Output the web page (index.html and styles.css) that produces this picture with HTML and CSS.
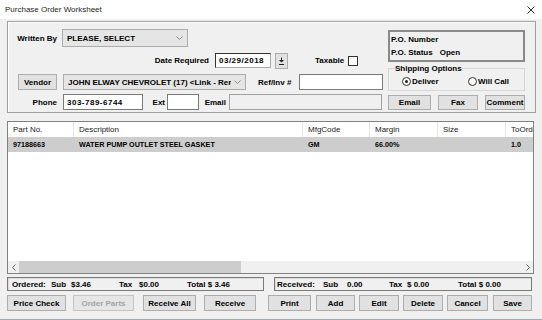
FILE: index.html
```html
<!DOCTYPE html>
<html lang="en">
  <head>
    <meta charset="UTF-8" />
    <title>Purchase Order Worksheet</title>
    <link rel="stylesheet" href="styles.css">
  </head>
  <body>
    <div class="window">
      <div class="titlebar">
        <span>Purchase Order Worksheet</span>
        <svg class="close" width="8" height="8" viewBox="0 0 8 8">
          <path d="M0.5 0.5L7.5 7.5M7.5 0.5L0.5 7.5" stroke="#333" stroke-width="1" fill="none" />
        </svg>
      </div>

      <div class="content">
        <div class="panel">
          <div class="form">
            <div class="row r1">
              <span class="lbl">Written By</span>
              <div class="select writer">
                <span class="select-text">PLEASE, SELECT</span>
                <svg class="chev" width="7" height="4" viewBox="0 0 7 4"><polyline points="0.5,0.5 3.5,3.5 6.5,0.5" stroke="#8a8a8a" fill="none" /></svg>
              </div>
            </div>
            <div class="row r2">
              <span class="lbl-date">Date Required</span>
              <div class="input date num">03/29/2018</div>
              <button class="btn datebtn">
                <svg width="7" height="8" viewBox="0 0 7 8"><path d="M3.5 0.5V3" stroke="#222" /><path d="M1 3h5L3.5 5.5z" fill="#222" /><path d="M1 7.5h5" stroke="#222" /></svg>
              </button>
              <span class="taxable">Taxable</span>
              <span class="check"></span>
            </div>
            <div class="row r3">
              <button class="btn vendor">Vendor</button>
              <div class="select vendor-sel">
                <span class="select-text">JOHN ELWAY CHEVROLET (17) &lt;Link - Remote&gt;</span>
                <svg class="chev" width="7" height="4" viewBox="0 0 7 4"><polyline points="0.5,0.5 3.5,3.5 6.5,0.5" stroke="#8a8a8a" fill="none" /></svg>
              </div>
              <span class="lbl-ref">Ref/Inv #</span>
              <div class="input ref"></div>
            </div>
            <div class="row r4">
              <span class="lbl">Phone</span>
              <div class="input phone num">303-789-6744</div>
              <span class="lbl-ext">Ext</span>
              <div class="input ext"></div>
              <span class="lbl-email">Email</span>
              <div class="input email"></div>
            </div>
          </div>

          <div class="side">
            <div class="po">
              <div>P.O. Number</div>
              <div><span class="po-key">P.O. Status</span>Open</div>
            </div>
            <fieldset class="ship">
              <legend>Shipping Options</legend>
              <div class="radios">
                <span class="radio deliver"><span class="dot on"></span>Deliver</span>
                <span class="radio"><span class="dot"></span>Will Call</span>
              </div>
            </fieldset>
            <div class="side-btns">
              <button class="btn b-email">Email</button>
              <button class="btn b-fax">Fax</button>
              <button class="btn b-comment">Comment</button>
            </div>
          </div>
        </div>

        <div class="grid">
          <div class="grid-view">
            <div class="cols head">
              <span>Part No.</span>
              <span>Description</span>
              <span>MfgCode</span>
              <span>Margin</span>
              <span>Size</span>
              <span>ToOrder</span>
            </div>
            <div class="cols item">
              <span>97188663</span>
              <span>WATER PUMP OUTLET STEEL GASKET</span>
              <span>GM</span>
              <span>66.00%</span>
              <span></span>
              <span>1.0</span>
            </div>
          </div>
          <div class="hscroll">
            <span class="arrow">
              <svg width="4" height="7" viewBox="0 0 4 7"><polyline points="3.5,0.5 0.5,3.5 3.5,6.5" stroke="#606060" fill="none" /></svg>
            </span>
            <span class="thumb"></span>
            <span class="track"></span>
            <span class="arrow">
              <svg width="4" height="7" viewBox="0 0 4 7"><polyline points="0.5,0.5 3.5,3.5 0.5,6.5" stroke="#606060" fill="none" /></svg>
            </span>
          </div>
        </div>

        <div class="totals">
          <div class="sum ordered">
            <span class="t1">Ordered:</span>
            <span class="t2">Sub</span>
            <span class="t3">$3.46</span>
            <span class="t4">Tax</span>
            <span class="t5">$0.00</span>
            <span>Total $ 3.46</span>
          </div>
          <div class="sum received">
            <span class="t1">Received:</span>
            <span class="t2">Sub</span>
            <span class="t3">0.00</span>
            <span class="t4">Tax</span>
            <span class="t5">$ 0.00</span>
            <span>Total $ 0.00</span>
          </div>
        </div>

        <div class="actions">
          <button class="btn a-price">Price Check</button>
          <button class="btn a-order" disabled>Order Parts</button>
          <button class="btn a-recall">Receive All</button>
          <button class="btn a-receive">Receive</button>
          <button class="btn a-print">Print</button>
          <button class="btn a-add">Add</button>
          <button class="btn a-edit">Edit</button>
          <button class="btn a-delete">Delete</button>
          <button class="btn a-cancel">Cancel</button>
          <button class="btn a-save">Save</button>
        </div>
      </div>
    </div>
  </body>
</html>
```

FILE: styles.css
```css
* {
  box-sizing: border-box;
}

body {
  margin: 0;
  font-family: "Liberation Sans", Arial, sans-serif;
  font-size: 8px;
  font-weight: bold;
  color: #000;
}

.window {
  width: 542px;
  height: 320px;
  background-color: #f0f0f0;
  border-bottom: 1px solid #7fb1e3;
  overflow: hidden;
}

.titlebar {
  height: 19px;
  background-color: #fff;
  display: flex;
  align-items: center;
  justify-content: space-between;
  padding: 0 7px 0 5px;
  font-weight: normal;
  color: #1e1e1e;
}

.content {
  padding: 2px 6px 0 7px;
}

/* top panel */

.panel {
  height: 92px;
  display: flex;
  padding-top: 7px;
  border: 1px solid #a0a0a0;
  box-shadow: inset 1px 1px 0 #fff;
}

.form {
  width: 376px;
}

.row {
  display: flex;
  align-items: center;
}

.r1 {
  height: 18px;
}

.r2 {
  height: 15px;
  margin-top: 6px;
}

.r3 {
  height: 16px;
  margin-top: 6px;
}

.r4 {
  height: 16px;
  margin-top: 4px;
}

.lbl {
  width: 51px;
  text-align: right;
  padding-right: 2px;
}

.select {
  height: 100%;
  display: flex;
  align-items: center;
  background-color: #e5e5e5;
  border: 1px solid #acacac;
  padding: 0 4px;
}

.select-text {
  flex: 1;
  overflow: hidden;
  white-space: nowrap;
}

.chev {
  margin-left: 3px;
}

.writer {
  width: 126px;
  margin-left: 3px;
}

.vendor-sel {
  width: 183px;
  margin-left: 6px;
}

.input {
  height: 100%;
  background-color: #fff;
  border: 1px solid #7a7a7a;
  padding: 0 3px;
  display: flex;
  align-items: center;
}

.num {
  letter-spacing: 0.5px;
}

.lbl-date {
  width: 204px;
  text-align: right;
  padding-right: 3px;
}

.date {
  width: 56px;
  margin-left: 3px;
  border-color: #333 #aaa #aaa #333;
}

.datebtn {
  width: 13px;
  height: 13px;
  margin-left: 4px;
  padding: 0;
  display: flex;
  align-items: center;
  justify-content: center;
}

.taxable {
  margin-left: 27px;
}

.check {
  width: 10px;
  height: 10px;
  margin-left: 4px;
  background-color: #fff;
  border: 1px solid #333;
}

.btn {
  font: inherit;
  color: #000;
  background-color: #e1e1e1;
  border: 1px solid #adadad;
  padding: 0;
  height: 16px;
}

.btn:disabled {
  color: #a3a3a3;
  background-color: #e6e6e6;
  border-color: #c4c4c4;
}

.vendor {
  width: 39px;
  height: 16px;
  margin-left: 10px;
}

.lbl-ref {
  width: 41px;
  margin-left: 12px;
}

.ref {
  width: 84px;
}

.phone {
  width: 80px;
  margin-left: 4px;
}

.lbl-ext {
  width: 24px;
  text-align: right;
  padding-right: 2px;
}

.ext {
  width: 32px;
}

.lbl-email {
  width: 30px;
  text-align: right;
  padding-right: 3px;
}

.email {
  width: 153px;
  background-color: #f0f0f0;
  border-color: #a0a0a0;
}

/* side column */

.side {
  width: 137px;
  margin-left: 4px;
}

.po {
  height: 32px;
  margin-top: 1px;
  border: 2px solid #8a8a8a;
  padding: 1px 0 0 1px;
  line-height: 13px;
}

.po-key {
  margin-right: 7px;
}

.ship {
  margin: 2px 0 0;
  padding: 0 0 4px 6px;
  border: 1px solid #d6d6d6;
  min-width: 0;
}

.ship legend {
  padding: 0;
  line-height: 9px;
}

.radios {
  display: flex;
  align-items: center;
  height: 10px;
  margin-top: 3px;
}

.radio {
  display: flex;
  align-items: center;
}

.deliver {
  width: 66px;
  margin-left: 7px;
}

.dot {
  width: 9px;
  height: 9px;
  border-radius: 50%;
  border: 1px solid #333;
  background-color: #fff;
  margin-right: 1px;
  display: flex;
  align-items: center;
  justify-content: center;
}

.dot.on::after {
  content: "";
  width: 3px;
  height: 3px;
  border-radius: 50%;
  background-color: #222;
}

.side-btns {
  display: flex;
  margin-top: 4px;
}

.side-btns .btn {
  height: 15px;
}

.b-email {
  width: 43px;
}

.b-fax {
  width: 40px;
  margin-left: 7px;
}

.b-comment {
  width: 40px;
  margin-left: 7px;
}

/* grid */

.grid {
  width: 527px;
  height: 153px;
  margin-top: 8px;
  border: 1px solid #828282;
  background-color: #fff;
  display: flex;
  flex-direction: column;
}

.grid-view {
  flex: 1;
  overflow: hidden;
}

.cols {
  display: grid;
  grid-template-columns: 66px 229px 67px 68px 68px 80px;
  height: 15px;
  width: 578px;
}

.cols span {
  padding-left: 5px;
  display: flex;
  align-items: center;
  white-space: nowrap;
}

.head {
  font-weight: normal;
  color: #1a1a1a;
}

.head span {
  border-right: 1px solid #e5e5e5;
}

.item {
  background-color: #cdcdcd;
  font-size: 7.2px;
}

.hscroll {
  height: 12px;
  display: flex;
  background-color: #f0f0f0;
}

.arrow {
  width: 11px;
  display: flex;
  align-items: center;
  justify-content: center;
}

.thumb {
  width: 222px;
  background-color: #cdcdcd;
}

.track {
  flex: 1;
}

/* totals */

.totals {
  display: flex;
  margin-top: 3px;
}

.sum {
  height: 14px;
  width: 257px;
  border: 1px solid #7a7a7a;
  box-shadow: inset 1px 1px 0 #dcdcdc;
  display: flex;
  align-items: center;
  white-space: nowrap;
}

.ordered {
  padding-left: 4px;
}

.ordered .t1 { width: 39px; }
.ordered .t2 { width: 20px; }
.ordered .t3 { width: 48px; }
.ordered .t4 { width: 20px; }
.ordered .t5 { width: 48px; }

.received {
  width: 258px;
  margin-left: 10px;
  padding-left: 2px;
}

.received .t1 { width: 46px; }
.received .t2 { width: 24px; }
.received .t3 { width: 42px; }
.received .t4 { width: 18px; }
.received .t5 { width: 51px; }

/* bottom buttons */

.actions {
  display: flex;
  margin-top: 4px;
}

.a-price { width: 59px; }
.a-order { width: 61px; margin-left: 7px; }
.a-recall { width: 53px; margin-left: 9px; }
.a-receive { width: 52px; margin-left: 8px; }
.a-print { width: 43px; margin-left: 12px; }
.a-add { width: 39px; margin-left: 5px; }
.a-edit { width: 40px; margin-left: 4px; }
.a-delete { width: 40px; margin-left: 4px; }
.a-cancel { width: 41px; margin-left: 4px; }
.a-save { width: 39px; margin-left: 5px; }
```
